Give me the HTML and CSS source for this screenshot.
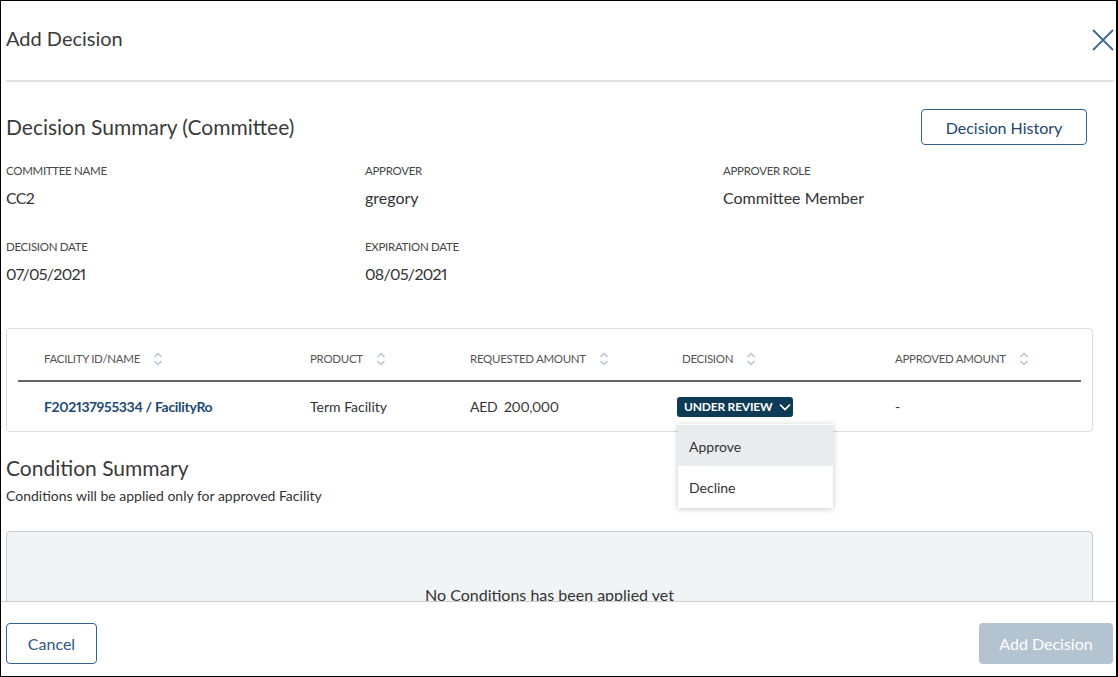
FILE: index.html
```html
<!DOCTYPE html>
<html lang="en">
<head>
<meta charset="utf-8">
<title>Add Decision</title>
<link rel="stylesheet" href="styles.css">
</head>
<body>
<div class="frame">
  <header class="header">
    <h1 class="title">Add Decision</h1>
    <button class="close" aria-label="Close">
      <svg width="24" height="24" viewBox="0 0 24 24"><path d="M2 2 L22 22 M22 2 L2 22" stroke="#3f6a92" stroke-width="1.8" fill="none"/></svg>
    </button>
  </header>

  <main class="body">
    <div class="summary-head">
      <h2 class="section-title">Decision Summary (Committee)</h2>
      <button class="btn-outline btn-history">Decision History</button>
    </div>

    <div class="info">
      <div class="field"><div class="label">Committee Name</div><div class="value num">CC2</div></div>
      <div class="field"><div class="label">Approver</div><div class="value">gregory</div></div>
      <div class="field"><div class="label">Approver Role</div><div class="value">Committee Member</div></div>
      <div class="field"><div class="label">Decision Date</div><div class="value num">07/05/2021</div></div>
      <div class="field"><div class="label">Expiration Date</div><div class="value num">08/05/2021</div></div>
    </div>

    <div class="table-card">
      <div class="thead">
        <div class="th">Facility ID/Name <svg class="sort" width="10" height="14" viewBox="0 0 10 14"><path d="M1.5 5 L5 1.5 L8.5 5 M1.5 9 L5 12.5 L8.5 9" stroke="#b9c5d1" stroke-width="1.5" fill="none"/></svg></div>
        <div class="th">Product <svg class="sort" width="10" height="14" viewBox="0 0 10 14"><path d="M1.5 5 L5 1.5 L8.5 5 M1.5 9 L5 12.5 L8.5 9" stroke="#b9c5d1" stroke-width="1.5" fill="none"/></svg></div>
        <div class="th">Requested Amount <svg class="sort" width="10" height="14" viewBox="0 0 10 14"><path d="M1.5 5 L5 1.5 L8.5 5 M1.5 9 L5 12.5 L8.5 9" stroke="#b9c5d1" stroke-width="1.5" fill="none"/></svg></div>
        <div class="th">Decision <svg class="sort" width="10" height="14" viewBox="0 0 10 14"><path d="M1.5 5 L5 1.5 L8.5 5 M1.5 9 L5 12.5 L8.5 9" stroke="#b9c5d1" stroke-width="1.5" fill="none"/></svg></div>
        <div class="th">Approved Amount <svg class="sort" width="10" height="14" viewBox="0 0 10 14"><path d="M1.5 5 L5 1.5 L8.5 5 M1.5 9 L5 12.5 L8.5 9" stroke="#b9c5d1" stroke-width="1.5" fill="none"/></svg></div>
      </div>
      <div class="trow">
        <div class="td link">F202137955334 / FacilityRo</div>
        <div class="td">Term Facility</div>
        <div class="td num">AED&nbsp;&nbsp;200,000</div>
        <div class="td td-badge">
          <div class="badge-wrap">
            <span class="badge">UNDER REVIEW
              <svg width="12" height="8" viewBox="0 0 12 8"><path d="M1 1.5 L6 6.5 L11 1.5" stroke="#ffffff" stroke-width="1.6" fill="none"/></svg>
            </span>
            <ul class="menu">
              <li class="menu-item active">Approve</li>
              <li class="menu-item">Decline</li>
            </ul>
          </div>
        </div>
        <div class="td">-</div>
      </div>
    </div>

    <h2 class="section-title cond-title">Condition Summary</h2>
    <p class="subtitle">Conditions will be applied only for approved Facility</p>

    <div class="empty-box">No Conditions has been applied yet</div>
  </main>

  <footer class="footer">
    <button class="btn-outline btn-cancel">Cancel</button>
    <button class="btn-primary">Add Decision</button>
  </footer>
</div>
</body>
</html>
```

FILE: styles.css
```css
* { box-sizing: border-box; }

html, body {
  margin: 0;
  padding: 0;
  background: #ffffff;
}

body {
  font-family: "Lato", "Noto Sans", "Liberation Sans", sans-serif;
  font-variant-numeric: proportional-nums;
  color: #333333;
}

.frame {
  width: 1118px;
  height: 677px;
  border: 1px solid #000000;
  border-right-width: 2px;
  display: flex;
  flex-direction: column;
  overflow: hidden;
  background: #ffffff;
}

.header {
  flex: none;
  height: 81px;
  margin: 0 2px 0 5px;
  padding-bottom: 5px;
  display: flex;
  align-items: center;
  justify-content: space-between;
  border-bottom: 2px solid #e1e1e1;
}

.title {
  margin: 0;
  font-size: 20px;
  line-height: 24px;
  font-weight: 400;
  color: #3a3a3a;
}

.close {
  border: 0;
  background: none;
  padding: 0;
  margin-right: -1px;
  margin-top: 3px;
  width: 24px;
  height: 24px;
  display: flex;
}

.body {
  flex: 1;
  overflow: hidden;
  padding: 0 23px 0 5px;
}

.summary-head {
  margin-top: 27px;
  display: flex;
  align-items: center;
  justify-content: space-between;
  padding-right: 6px;
}

.section-title {
  margin: 0;
  font-size: 21px;
  line-height: 26px;
  font-weight: 400;
  color: #3a3a3a;
}

.btn-outline {
  background: #ffffff;
  border: 1.5px solid #34618d;
  border-radius: 4px;
  font-family: inherit;
  font-size: 16px;
  color: #22476d;
  padding: 0;
}

.btn-history {
  width: 166px;
  height: 36px;
}

.info {
  margin-top: 18px;
  display: grid;
  grid-template-columns: 359px 358px 1fr;
  row-gap: 31px;
}

.label {
  font-size: 11.5px;
  line-height: 16px;
  letter-spacing: -0.3px;
  text-transform: uppercase;
  color: #474747;
}

.value {
  margin-top: 9px;
  font-size: 16px;
  line-height: 20px;
  color: #333333;
}

.num {
  letter-spacing: -0.7px;
}

.table-card {
  margin-top: 44px;
  border: 1px solid #dcdcdc;
  border-radius: 4px;
  padding: 0 11px;
}

.thead, .trow {
  display: grid;
  grid-template-columns: 266px 160px 212px 213px 1fr;
}

.thead {
  border-bottom: 2px solid #666666;
}

.th {
  padding: 22px 0 13px 26px;
  font-size: 11.5px;
  line-height: 16px;
  letter-spacing: -0.3px;
  text-transform: uppercase;
  color: #555555;
  display: flex;
  align-items: center;
  white-space: nowrap;
}

.sort {
  margin-left: 13px;
  flex: none;
}

.trow {
  height: 49px;
  align-items: center;
}

.td {
  padding-left: 26px;
  font-size: 14px;
  line-height: 18px;
  color: #333333;
  white-space: nowrap;
}

.td.num {
  letter-spacing: -0.3px;
}

.link {
  color: #1c4a72;
  font-weight: 700;
  letter-spacing: -0.3px;
}

.td-badge {
  padding-left: 21px;
}

.badge-wrap {
  position: relative;
  display: inline-block;
}

.badge {
  display: inline-flex;
  align-items: center;
  gap: 7px;
  width: 116px;
  height: 20px;
  padding: 0 0 0 7px;
  background: #0d3a54;
  color: #ffffff;
  border-radius: 3px;
  font-size: 12px;
  font-weight: 700;
  letter-spacing: -0.2px;
}

.menu {
  position: absolute;
  top: 27px;
  left: 1px;
  width: 155px;
  margin: 0;
  padding: 1px 0;
  list-style: none;
  background: #ffffff;
  box-shadow: 0 1px 6px rgba(0, 0, 0, 0.22);
  z-index: 5;
}

.menu-item {
  height: 41px;
  padding: 3px 0 0 11px;
  display: flex;
  align-items: center;
  font-size: 14px;
  color: #333333;
}

.menu-item.active {
  background: #e9ecef;
}

.cond-title {
  margin-top: 23px;
}

.subtitle {
  margin: 6px 0 0;
  font-size: 14px;
  line-height: 18px;
  color: #333333;
}

.empty-box {
  margin-top: 26px;
  height: 140px;
  background: #f1f4f7;
  border: 1px solid #c6cbd1;
  border-radius: 4px;
  padding-top: 53px;
  text-align: center;
  font-size: 16px;
  line-height: 20px;
  color: #333333;
}

.footer {
  flex: none;
  height: 75px;
  border-top: 1px solid #cccccc;
  padding: 21px 3px 0 5px;
  display: flex;
  align-items: flex-start;
  justify-content: space-between;
}

.btn-cancel {
  width: 91px;
  height: 41px;
  color: #2c5986;
}

.btn-primary {
  width: 134px;
  height: 41px;
  background: #b3c3d0;
  border: 0;
  border-radius: 4px;
  color: #ffffff;
  font-family: inherit;
  font-size: 16px;
  padding: 0;
}
```
